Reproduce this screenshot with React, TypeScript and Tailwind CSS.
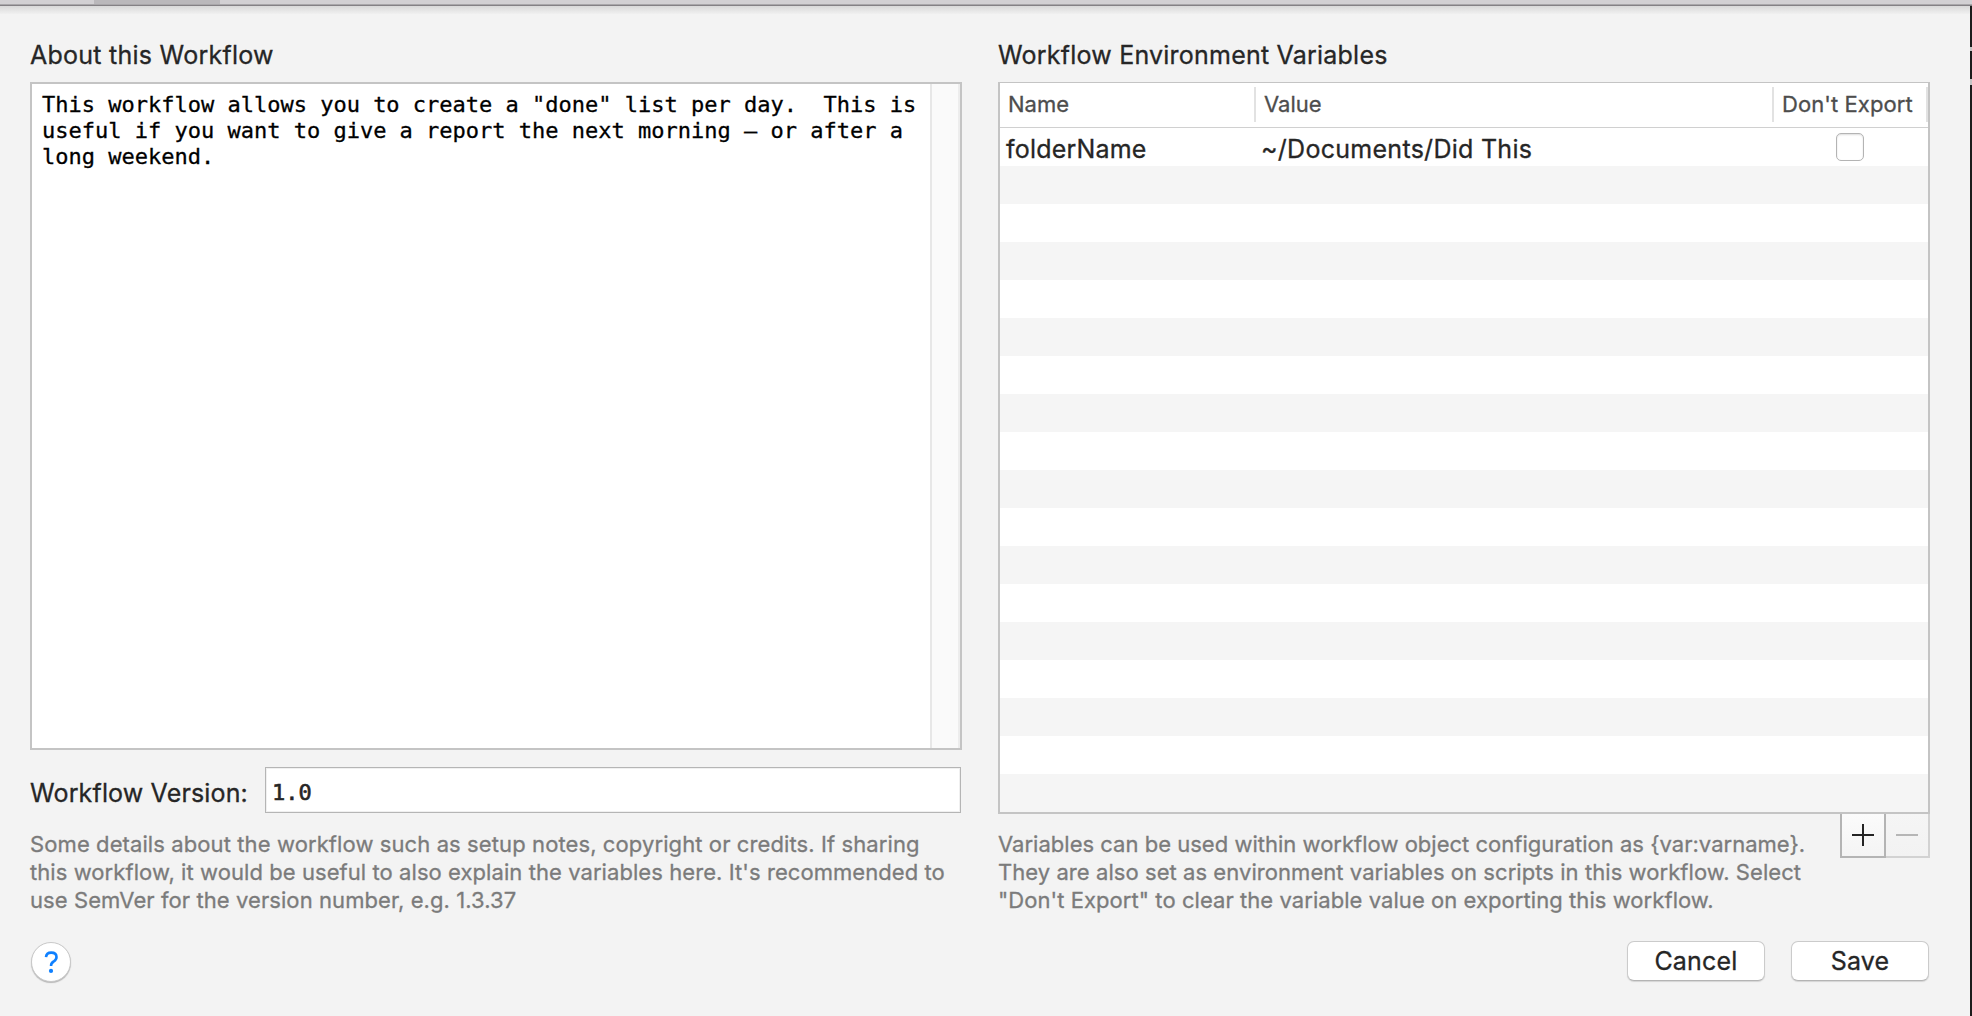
const variables = [{ name: "folderName", value: "~/Documents/Did This" }];
const rows = Array.from({ length: 18 }, (_, i) => variables[i] ?? null);

function TopEdge() {
  return (
    <div className="absolute inset-x-0 top-0">
      <div className="h-1 bg-[#d2d0d3] pl-[94px]">
        <div className="h-1 w-[126px] bg-[#bab8bb]" />
      </div>
      <div className="h-px bg-[#a9a7aa]" />
      <div className="h-px bg-[#848185]" />
      <div className="h-2 w-[1970px] bg-gradient-to-b from-[#d9d9d9] to-[#f0f0f0]" />
    </div>
  );
}

function RightEdge() {
  return (
    <div className="absolute top-[6px] right-0 bottom-0 flex w-[2px] flex-col bg-[#1c1c1c]">
      <div className="mt-[41px] h-1 bg-[#c4c4c4]" />
      <div className="mt-7 h-[6px] bg-[#c4c4c4]" />
    </div>
  );
}

function AboutPanel() {
  return (
    <section className="w-[932px]">
      <h2 className="text-[25px] leading-[30px] tracking-[0.25px]">About this Workflow</h2>
      <div className="mt-3 flex h-[668px] border-2 border-[#c4c4c4] bg-white">
        <p className="flex-1 pt-2 pl-[10px] font-['DejaVu_Sans_Mono',monospace] text-[22px] leading-[26px] whitespace-pre text-black">
          {'This workflow allows you to create a "done" list per day.  This is\nuseful if you want to give a report the next morning – or after a\nlong weekend.'}
        </p>
        <div className="w-[30px] border-r-2 border-l-2 border-r-[#ededed] border-l-[#e7e7e7] bg-[#fafafa]" />
      </div>
      <div className="mt-[17px] flex h-[46px] items-start">
        <label className="w-[235px] pt-[11px] text-[25px] leading-[30px] tracking-[0.15px] whitespace-nowrap">
          Workflow Version:
        </label>
        <div className="h-[46px] w-[696px] border border-[#b5b5b5] bg-white pt-3 pl-[6px] font-['DejaVu_Sans_Mono',monospace] text-[22px] leading-[26px] shadow-[inset_0_0_0_1px_#f0f0f0] [-webkit-text-stroke:0.6px]">
          1.0
        </div>
      </div>
      <p className="mt-[17px] text-[22px] leading-7 whitespace-nowrap text-[#7b7b7b]">
        <span className="block tracking-[0.1px]">Some details about the workflow such as setup notes, copyright or credits. If sharing</span>
        <span className="block tracking-[0.07px]">this workflow, it would be useful to also explain the variables here. It's recommended to</span>
        <span className="block tracking-[0.08px]">use SemVer for the version number, e.g. 1.3.37</span>
      </p>
    </section>
  );
}

function VariablesTable() {
  return (
    <div className="mt-3 border-2 border-t border-[#c4c4c4] bg-white">
      <div className="flex h-[45px] border-b border-[#d0d0d0] pt-1 text-[22px] leading-7 text-[#4d4d4d]">
        <div className="h-[35px] w-64 border-r-2 border-[#e2e2e2] pt-[3px] pl-2">Name</div>
        <div className="h-[35px] w-[518px] border-r-2 border-[#e2e2e2] pt-[3px] pl-2">Value</div>
        <div className="h-[35px] w-[154px] border-r-2 border-[#e2e2e2] pt-[3px] pl-2 tracking-[0.08px] whitespace-nowrap">
          Don't Export
        </div>
      </div>
      <div>
        {rows.map((row, i) => (
          <div key={i} className="flex h-[38px] odd:bg-white even:bg-[#f5f5f5]">
            {row && (
              <>
                <div className="w-[255px] pt-[6px] pl-[6px] text-[25px] leading-[30px] tracking-[0.2px]">{row.name}</div>
                <div className="w-[581px] pt-[6px] pl-[6px] text-[25px] leading-[30px] tracking-[0.28px]">{row.value}</div>
                <div className="mt-[5px] size-7 rounded-[5px] border border-[#b4b4b4] bg-white shadow-[inset_0_1px_2px_#ddd]" />
              </>
            )}
          </div>
        ))}
      </div>
    </div>
  );
}

function VariablesPanel() {
  return (
    <section className="w-[932px]">
      <h2 className="text-[25px] leading-[30px] tracking-[0.22px]">Workflow Environment Variables</h2>
      <VariablesTable />
      <div className="flex justify-between">
        <p className="pt-4 text-[22px] leading-7 whitespace-nowrap text-[#7b7b7b]">
          <span className="block tracking-[0.015px]">{"Variables can be used within workflow object configuration as {var:varname}."}</span>
          <span className="block tracking-[0.06px]">They are also set as environment variables on scripts in this workflow. Select</span>
          <span className="block tracking-[0.06px]">"Don't Export" to clear the variable value on exporting this workflow.</span>
        </p>
        <div className="flex h-11">
          <button className="flex w-[46px] border-2 border-t-0 border-[#b4b4b4] bg-gradient-to-b from-[#fbfbfb] to-[#f4f4f4] pt-[10px] pl-[10px]" aria-label="Add variable">
            <svg width="22" height="22" viewBox="0 0 22 22" fill="#242424">
              <rect x="0" y="10" width="22" height="2" />
              <rect x="10" y="0" width="2" height="22" />
            </svg>
          </button>
          <button className="flex w-11 border-r-2 border-b-2 border-[#d2d2d2] bg-gradient-to-b from-[#f5f5f5] to-[#f2f2f2] pt-[10px] pl-[10px]" aria-label="Remove variable">
            <svg width="22" height="22" viewBox="0 0 22 22" fill="#b6b6b6">
              <rect x="0" y="10" width="22" height="2" />
            </svg>
          </button>
        </div>
      </div>
    </section>
  );
}

function Footer() {
  return (
    <footer className="mt-[19px] flex items-start pr-[43px] pl-[31px]">
      <button
        className="mt-px flex size-10 rounded-full border border-[#c9c9c9] bg-white pt-2 pl-[12px] shadow-[0_1px_1px_#b8b8b8]"
        aria-label="Help"
      >
        <svg width="15" height="24" viewBox="0 0 15 24" fill="none">
          <path
            d="M2 6.2C2.2 3.4 4.2 1.6 7.2 1.6c3.2 0 5.3 1.8 5.3 4.5 0 2.1-1 3.3-2.8 4.4C7.8 11.6 7.1 12.400 7.100 14.200V15"
            stroke="#0f80ff"
            strokeWidth="2.6"
          />
          <circle cx="7" cy="19.900" r="2.1" fill="#0f80ff" />
        </svg>
      </button>
      <div className="ml-auto flex gap-[26px] text-[25px] leading-[30px] tracking-[0.2px]">
        <button className="h-10 w-[138px] rounded-[7px] border border-[#cbcbcb] border-b-[#b4b4b4] bg-white shadow-[0_1px_1px_#d4d4d4]">
          Cancel
        </button>
        <button className="h-10 w-[138px] rounded-[7px] border border-[#cbcbcb] border-b-[#b4b4b4] bg-white shadow-[0_1px_1px_#d4d4d4]">
          Save
        </button>
      </div>
    </footer>
  );
}

export default function App() {
  return (
    <main className="relative h-[1016px] w-[1972px] overflow-hidden bg-[#f3f3f3] font-[Inter,sans-serif] text-[#262626] [-webkit-text-stroke:0.3px]">
      <TopEdge />
      <RightEdge />
      <div className="flex h-[922px] gap-9 pt-10 pl-[30px]">
        <AboutPanel />
        <VariablesPanel />
      </div>
      <Footer />
    </main>
  );
}
